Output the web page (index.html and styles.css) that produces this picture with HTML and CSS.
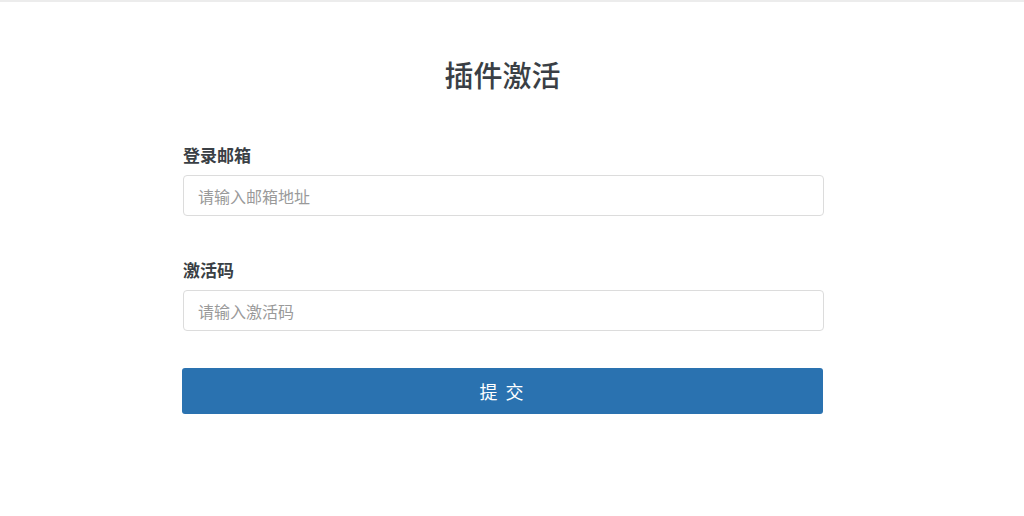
FILE: index.html
```html
<!DOCTYPE html>
<html lang="zh-CN">
<head>
<meta charset="utf-8">
<title>插件激活</title>
<link rel="stylesheet" href="styles.css">
</head>
<body>
<div class="topline"></div>
<div class="page">
  <form class="card">
    <h1 class="title">插件激活</h1>
    <div class="field">
      <label class="label">登录邮箱</label>
      <input class="input" type="text" placeholder="请输入邮箱地址">
    </div>
    <div class="field">
      <label class="label">激活码</label>
      <input class="input" type="text" placeholder="请输入激活码">
    </div>
    <button class="submit" type="button">提 交</button>
  </form>
</div>
</body>
</html>
```
FILE: styles.css
```css
html, body {
  margin: 0;
  padding: 0;
  background: #fff;
  font-family: "Noto Sans CJK SC", "Noto Sans", sans-serif;
  color: #3a3f45;
}
.topline {
  height: 2px;
  background: #ececec;
}
.page {
  width: 1005px;
}
.card {
  width: 641px;
  margin: 0 auto;
  display: flex;
  flex-direction: column;
}
.title {
  margin: 52px 0 0;
  text-align: center;
  font-size: 29px;
  font-weight: 500;
  line-height: 40px;
  color: #3a3f45;
}
.field {
  display: flex;
  flex-direction: column;
  margin-top: 49px;
}
.field + .field {
  margin-top: 42px;
}
.label {
  font-size: 17px;
  font-weight: 700;
  line-height: 24px;
  margin-bottom: 8px;
  padding-left: 1px;
}
.input {
  box-sizing: border-box;
  width: 641px;
  height: 41px;
  margin-left: 1px;
  padding: 0 14px;
  border: 1px solid #dcdcdc;
  border-radius: 4px;
  font-family: inherit;
  font-size: 16px;
  color: #333;
  outline: none;
}
.input::placeholder {
  color: #9a9a9a;
}
.submit {
  margin-top: 37px;
  height: 46px;
  border: none;
  border-radius: 3px;
  background: #2a72b0;
  color: #fff;
  font-family: inherit;
  font-size: 18px;
  letter-spacing: 2px;
  cursor: pointer;
}
```
